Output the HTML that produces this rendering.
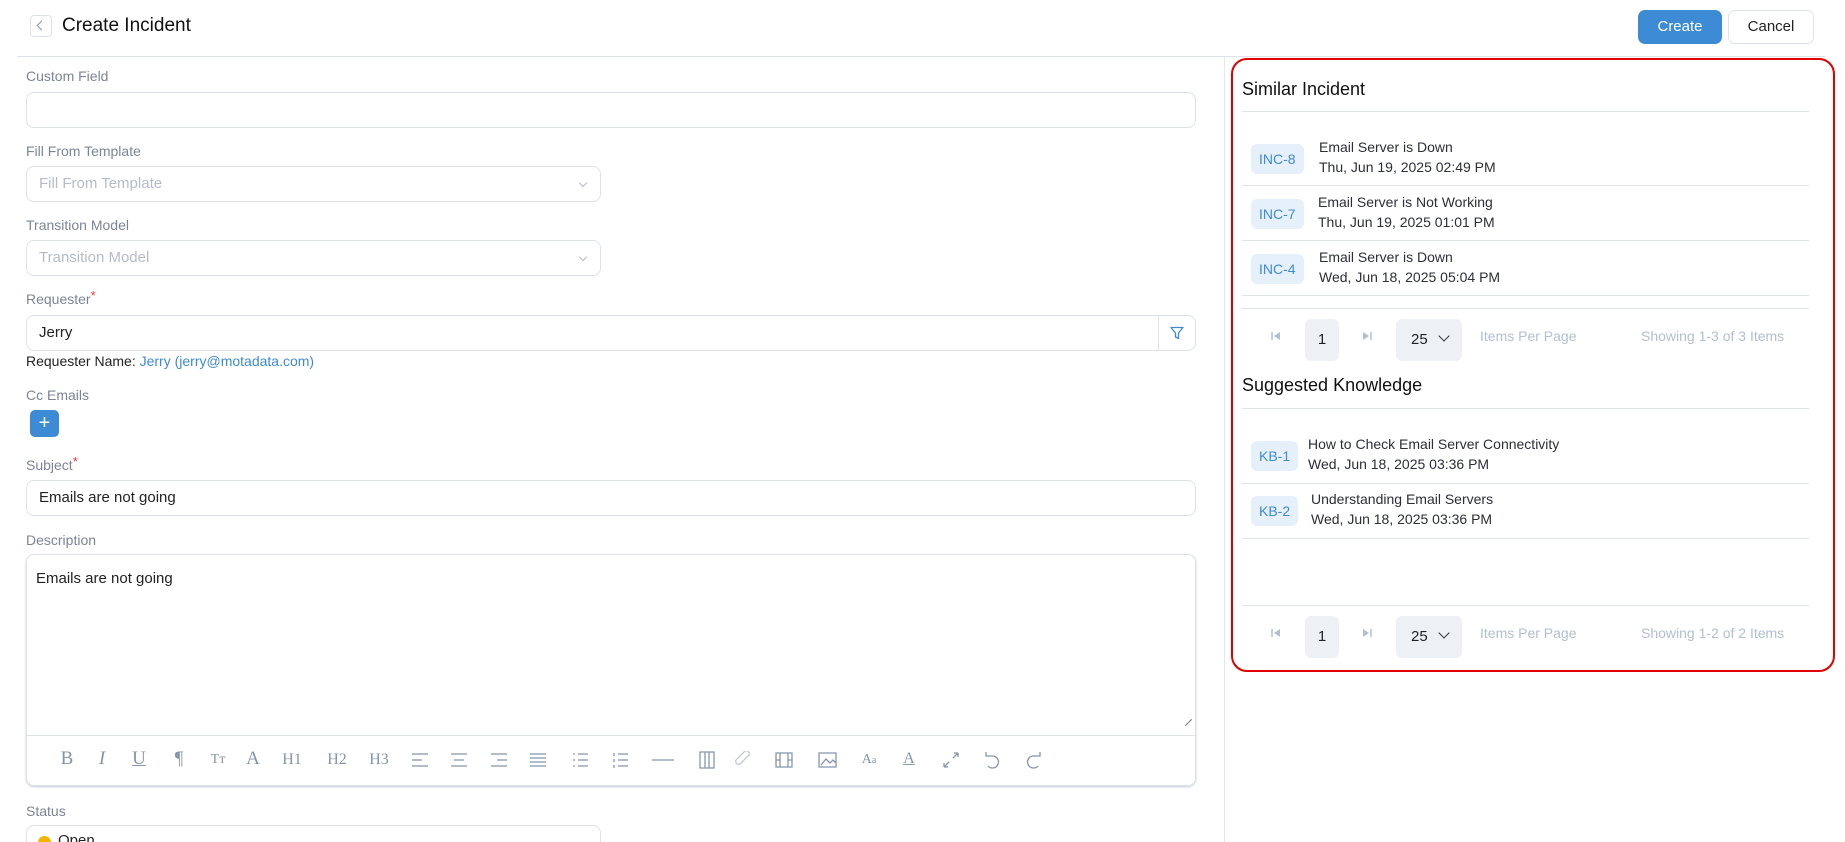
<!DOCTYPE html>
<html><head><meta charset="utf-8"><style>
*{box-sizing:border-box;margin:0;padding:0}
html{width:1845px;height:842px;overflow:hidden}
body{width:1845px;height:842px;overflow:hidden;background:#fff;font-family:"Liberation Sans",sans-serif;color:#1f2937;position:relative}
.a{position:absolute}
.lbl{position:absolute;left:26px;font-size:14px;color:#7b8599}
.inp{position:absolute;left:26px;border:1px solid #dde2ea;border-radius:8px;height:36px;font-size:15px;padding:0 12px;line-height:34px;color:#222}
.ph{color:#b4bccb}
.chev{position:absolute;right:14px;top:13px;width:6px;height:6px;border-right:1px solid #b4bccb;border-bottom:1px solid #b4bccb;transform:rotate(45deg)}
.star{color:#e53935;font-size:13px;vertical-align:top;position:relative;top:-3px}
.tb{position:absolute;top:748px;font-family:"Liberation Serif",serif;font-size:19px;color:#8595ab;transform:translateX(-50%)}
.hr{position:absolute;left:1242px;width:567px;height:1px;background:#dfe4ec}
.badge{position:absolute;left:1251px;height:30px;background:#e6f0fa;color:#3f8bd4;border-radius:6px;font-size:14px;line-height:30px;padding:0 8px}
.t1{position:absolute;font-size:14px;color:#2b2f38}
.pbox{position:absolute;background:#edf1f6;border-radius:6px;text-align:center;font-size:15px;line-height:42px;height:42px;color:#222}
.mut{color:#b2bfd2;font-size:14px;position:absolute}
</style></head><body>
<!-- header -->
<div class="a" style="left:30px;top:15px;width:22px;height:22px;border:1px solid #dde2ea;border-radius:4px"></div>
<div class="a" style="left:38px;top:22px;width:7px;height:7px;border-left:1px solid #8a94a6;border-bottom:1px solid #8a94a6;transform:rotate(45deg)"></div>
<div class="a" style="left:62px;top:15px;font-size:19px;color:#111">Create Incident</div>
<div class="a" style="left:1638px;top:10px;width:84px;height:34px;background:#3d8bd4;border-radius:7px;color:#fff;font-size:15px;text-align:center;line-height:34px">Create</div>
<div class="a" style="left:1728px;top:10px;width:86px;height:34px;border:1px solid #dde2ea;border-radius:7px;color:#222;font-size:15px;text-align:center;line-height:32px">Cancel</div>
<div class="a" style="left:17px;top:56px;width:1808px;height:1px;background:#dde2ea"></div>
<div class="a" style="left:1224px;top:57px;width:1px;height:785px;background:#e4e8ee"></div>

<!-- form -->
<div class="lbl" style="top:68px">Custom Field</div>
<div class="inp" style="top:92px;width:1170px"></div>
<div class="lbl" style="top:143px">Fill From Template</div>
<div class="inp ph" style="top:166px;width:575px">Fill From Template<span class="chev"></span></div>
<div class="lbl" style="top:217px">Transition Model</div>
<div class="inp ph" style="top:240px;width:575px">Transition Model<span class="chev"></span></div>
<div class="lbl" style="top:291px">Requester<span class="star">*</span></div>
<div class="inp" style="top:315px;width:1170px">Jerry
<div class="a" style="right:36px;top:0;width:1px;height:34px;background:#dde2ea"></div>
<svg class="a" style="right:11px;top:10px" width="14" height="14" viewBox="0 0 14 14"><path d="M1 1.5h12L8.5 7v5.5L5.5 11V7z" fill="none" stroke="#3d8bd4" stroke-width="1.3" stroke-linejoin="round"/></svg></div>
<div class="a" style="left:26px;top:353px;font-size:14px;color:#222">Requester Name: <span style="color:#3d8bd4">Jerry (jerry@motadata.com)</span></div>
<div class="lbl" style="top:387px">Cc Emails</div>
<div class="a" style="left:30px;top:410px;width:29px;height:27px;background:#3d8bd4;border-radius:5px;color:#fff;font-size:20px;text-align:center;line-height:26px">+</div>
<div class="lbl" style="top:457px">Subject<span class="star">*</span></div>
<div class="inp" style="top:480px;width:1170px">Emails are not going</div>
<div class="lbl" style="top:532px">Description</div>
<div class="a" style="left:26px;top:554px;width:1170px;height:232px;border:1px solid #dde2ea;border-radius:8px;box-shadow:0 1px 2px #c5ccd8"></div>
<div class="a" style="left:36px;top:570px;font-size:15px;color:#222">Emails are not going</div>
<div class="a" style="left:27px;top:735px;width:1168px;height:1px;background:#dde2ea"></div>
<div class="a" style="left:1184px;top:722px;width:9px;height:1px;background:#666;transform:rotate(-45deg)"></div>
<div class="tb" style="left:67px">B</div><div class="tb" style="left:102px;font-style:italic">I</div>
<div class="tb" style="left:139px;text-decoration:underline">U</div><div class="tb" style="left:179px">¶</div>
<div class="tb" style="left:218px;font-size:14px;top:752px">Tт</div><div class="tb" style="left:253px">A</div>
<div class="tb" style="left:292px;font-size:16px;top:751px">H1</div><div class="tb" style="left:337px;font-size:16px;top:751px">H2</div><div class="tb" style="left:379px;font-size:16px;top:751px">H3</div>
<svg class="a" style="left:410px;top:751px" width="640" height="20" viewBox="410 751 640 20" fill="none" stroke="#8595ab" stroke-width="1.3">
<path d="M412 754h16M412 760h10M412 766h16"/><path d="M451 754h16M454 760h10M451 766h16"/><path d="M491 754h16M497 760h10M491 766h16"/><path d="M530 754h16M530 758h16M530 762h16M530 766h16"/>
<path d="M573 754h2M578 754h10M573 760h2M578 760h10M573 766h2M578 766h10"/><path d="M614 753v3M614 759v3M614 765v3M618 754h10M618 760h10M618 766h10"/>
<path d="M652 760h22"/><path d="M700 752h14v16h-14zM705 752v16M709 752v16"/>
<path d="M740 764l9-9a3 3 0 0 0-4-4l-9 9a3 3 0 0 0 4 4z" stroke="#c0c8d4"/>
<path d="M776 753h16v14h-16zM780 753v14M788 753v14M776 760h4M788 760h4"/>
<path d="M819 753h17v14h-17zM821 765l5-6 4 4 3-3 3 3"/>
<path d="M944 767l5-5M944 767v-4M944 767h4M958 753l-5 5M958 753v4M958 753h-4"/>
<path d="M986 756h6a6 6 0 1 1-4 10M986 752v4h4"/><path d="M1040 756h-6a6 6 0 1 0 4 10M1040 752v4h-4"/>
</svg>
<div class="tb" style="left:869px;font-size:14px;top:752px">A<span style="font-size:10px">a</span></div>
<div class="tb" style="left:909px;font-size:16px;top:750px;text-decoration:underline">A</div>
<div class="lbl" style="top:803px">Status</div>
<div class="a" style="left:26px;top:825px;width:575px;height:36px;border:1px solid #dde2ea;border-radius:8px"></div>
<div class="a" style="left:38px;top:836px;width:13px;height:13px;border-radius:50%;background:#f5b400"></div>
<div class="a" style="left:58px;top:832px;font-size:15px;color:#222">Open</div>

<!-- right panel -->
<div class="a" style="left:1231px;top:58px;width:604px;height:614px;border:2px solid #e00000;border-radius:16px"></div>
<div class="a" style="left:1242px;top:79px;font-size:18px;color:#111">Similar Incident</div>
<div class="hr" style="top:111px"></div>
<div class="badge" style="top:144px">INC-8</div>
<div class="t1" style="left:1319px;top:139px">Email Server is Down</div><div class="t1" style="left:1319px;top:159px">Thu, Jun 19, 2025 02:49 PM</div>
<div class="hr" style="top:185px"></div>
<div class="badge" style="top:199px">INC-7</div>
<div class="t1" style="left:1318px;top:194px">Email Server is Not Working</div><div class="t1" style="left:1318px;top:214px">Thu, Jun 19, 2025 01:01 PM</div>
<div class="hr" style="top:240px"></div>
<div class="badge" style="top:254px">INC-4</div>
<div class="t1" style="left:1319px;top:249px">Email Server is Down</div><div class="t1" style="left:1319px;top:269px">Wed, Jun 18, 2025 05:04 PM</div>
<div class="hr" style="top:295px"></div>
<div class="hr" style="top:308px"></div>
<svg class="a" style="left:1271px;top:331px" width="10" height="10"><path d="M1 1v8" stroke="#b2bfd2" stroke-width="1.5"/><path d="M9 1v8L3 5z" fill="#b2bfd2"/></svg>
<div class="pbox" style="left:1305px;top:319px;width:34px">1</div>
<svg class="a" style="left:1362px;top:331px" width="10" height="10"><path d="M9 1v8" stroke="#b2bfd2" stroke-width="1.5"/><path d="M1 1v8L7 5z" fill="#b2bfd2"/></svg>
<div class="pbox" style="left:1396px;top:319px;width:66px;text-align:left;padding-left:15px">25 <span style="display:inline-block;width:8px;height:8px;border-right:1.5px solid #333;border-bottom:1.5px solid #333;transform:rotate(45deg);margin:0 0 4px 8px"></span></div>
<div class="mut" style="left:1480px;top:328px">Items Per Page</div>
<div class="mut" style="left:1641px;top:328px">Showing 1-3 of 3 Items</div>

<div class="a" style="left:1242px;top:375px;font-size:18px;color:#111">Suggested Knowledge</div>
<div class="hr" style="top:408px"></div>
<div class="badge" style="top:441px">KB-1</div>
<div class="t1" style="left:1308px;top:436px">How to Check Email Server Connectivity</div><div class="t1" style="left:1308px;top:456px">Wed, Jun 18, 2025 03:36 PM</div>
<div class="hr" style="top:483px"></div>
<div class="badge" style="top:496px">KB-2</div>
<div class="t1" style="left:1311px;top:491px">Understanding Email Servers</div><div class="t1" style="left:1311px;top:511px">Wed, Jun 18, 2025 03:36 PM</div>
<div class="hr" style="top:538px"></div>
<div class="hr" style="top:605px"></div>
<svg class="a" style="left:1271px;top:628px" width="10" height="10"><path d="M1 1v8" stroke="#b2bfd2" stroke-width="1.5"/><path d="M9 1v8L3 5z" fill="#b2bfd2"/></svg>
<div class="pbox" style="left:1305px;top:616px;width:34px">1</div>
<svg class="a" style="left:1362px;top:628px" width="10" height="10"><path d="M9 1v8" stroke="#b2bfd2" stroke-width="1.5"/><path d="M1 1v8L7 5z" fill="#b2bfd2"/></svg>
<div class="pbox" style="left:1396px;top:616px;width:66px;text-align:left;padding-left:15px">25 <span style="display:inline-block;width:8px;height:8px;border-right:1.5px solid #333;border-bottom:1.5px solid #333;transform:rotate(45deg);margin:0 0 4px 8px"></span></div>
<div class="mut" style="left:1480px;top:625px">Items Per Page</div>
<div class="mut" style="left:1641px;top:625px">Showing 1-2 of 2 Items</div>
</body></html>
